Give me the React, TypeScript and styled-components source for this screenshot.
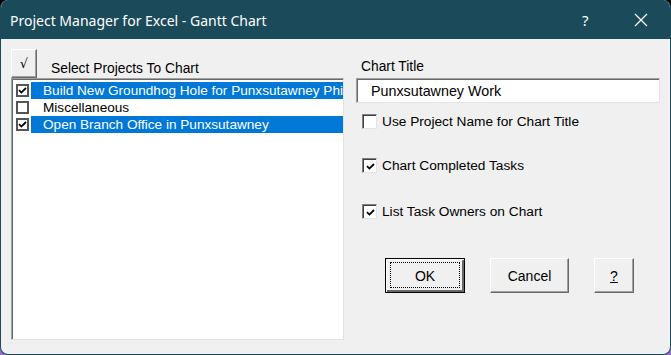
import React from "react";
import styled, { createGlobalStyle } from "styled-components";

const GlobalStyle = createGlobalStyle`
  html, body {
    margin: 0;
    padding: 0;
    width: 671px;
    height: 355px;
    overflow: hidden;
    background: linear-gradient(#000 0%, #000 50%, #9a6ad0 50%);
  }
`;

const projects = [
  { name: "Build New Groundhog Hole for Punxsutawney Phil", checked: true },
  { name: "Miscellaneous", checked: false },
  { name: "Open Branch Office in Punxsutawney", checked: true },
];

const options = [
  { label: "Use Project Name for Chart Title", checked: false, top: 11 },
  { label: "Chart Completed Tasks", checked: true, top: 29 },
  { label: "List Task Owners on Chart", checked: true, top: 31 },
];

const CheckMark = () => (
  <svg width="9" height="9" viewBox="0 0 9 9">
    <path d="M1 4.2 L3.4 6.6 L8 2" stroke="#000" strokeWidth="1.8" fill="none" />
  </svg>
);

const App = () => {
  return (
    <>
      <GlobalStyle />
      <Window>
        <TitleBar>
          <Title>Project Manager for Excel - Gantt Chart</Title>
          <HelpGlyph>?</HelpGlyph>
          <CloseIcon>
            <svg width="14" height="14" viewBox="0 0 14 14">
              <path d="M1 1 L13 13 M13 1 L1 13" stroke="#fff" strokeWidth="1.2" />
            </svg>
          </CloseIcon>
        </TitleBar>
        <Body>
          <LeftPane>
            <HeaderRow>
              <SelectAllButton>√</SelectAllButton>
              <Label>Select Projects To Chart</Label>
            </HeaderRow>
            <ListBox>
              {projects.map((p) => (
                <ListRow key={p.name}>
                  <ListCheck>{p.checked && <CheckMark />}</ListCheck>
                  <ListText $selected={p.checked}>{p.name}</ListText>
                </ListRow>
              ))}
            </ListBox>
          </LeftPane>
          <RightPane>
            <Label $indent={5}>Chart Title</Label>
            <TextBox>Punxsutawney Work</TextBox>
            {options.map((o) => (
              <OptionRow key={o.label} $top={o.top}>
                <OptionCheck>{o.checked && <CheckMark />}</OptionCheck>
                <OptionLabel>{o.label}</OptionLabel>
              </OptionRow>
            ))}
            <ButtonRow>
              <DialogButton $default $width={80}>
                OK
              </DialogButton>
              <DialogButton $width={79}>Cancel</DialogButton>
              <DialogButton $width={40}>
                <u>?</u>
              </DialogButton>
            </ButtonRow>
          </RightPane>
        </Body>
      </Window>
    </>
  );
};

export default App;

const Window = styled.div`
  box-sizing: border-box;
  width: 671px;
  height: 355px;
  display: flex;
  flex-direction: column;
  background: #f0f0f0;
  border: 1px solid #1b4a5a;
  border-top: none;
  border-radius: 8px;
  overflow: hidden;
  font-family: "Liberation Sans", Arial, sans-serif;
  color: #000;
`;

const TitleBar = styled.div`
  height: 39px;
  flex: none;
  display: flex;
  align-items: center;
  background: #1b4a5a;
  color: #fff;
  padding-left: 9px;
`;

const Title = styled.div`
  font-family: "Noto Sans", "Open Sans", sans-serif;
  font-size: 14px;
  flex: 1;
  padding-top: 1px;
`;

const HelpGlyph = styled.div`
  font-family: "Noto Sans", sans-serif;
  font-size: 15px;
  width: 14px;
  margin-right: 38px;
`;

const CloseIcon = styled.div`
  width: 14px;
  height: 14px;
  display: flex;
  margin-right: 22px;
`;

const Body = styled.div`
  flex: 1;
  display: flex;
  gap: 12px;
  padding: 10px 10px 14px 10px;
`;

const LeftPane = styled.div`
  width: 333px;
  display: flex;
  flex-direction: column;
`;

const HeaderRow = styled.div`
  display: flex;
  align-items: flex-end;
  gap: 14px;
  height: 29px;
`;

const SelectAllButton = styled.div`
  box-sizing: border-box;
  width: 26px;
  height: 29px;
  display: flex;
  align-items: center;
  justify-content: center;
  background: #f0f0f0;
  border: 1px solid;
  border-color: #fff #696969 #696969 #fff;
  box-shadow: inset -1px -1px #a0a0a0;
  font-family: "DejaVu Sans", sans-serif;
  font-size: 13px;
`;

const Label = styled.div<{ $indent?: number }>`
  font-size: 13.8px;
  line-height: 16px;
  padding-bottom: 1px;
  padding-left: ${(p) => p.$indent ?? 0}px;
`;

const ListBox = styled.div`
  flex: 1;
  box-sizing: border-box;
  background: #fff;
  border: 1px solid;
  border-color: #a0a0a0 #e3e3e3 #e3e3e3 #a0a0a0;
  box-shadow: inset 1px 1px #696969;
  padding: 3px 0 0 2px;
  overflow: hidden;
`;

const ListRow = styled.div`
  display: flex;
  align-items: center;
  height: 17px;
`;

const ListCheck = styled.div`
  box-sizing: border-box;
  width: 13px;
  height: 13px;
  margin: 0 2px 0 2px;
  border: 2px solid #555;
  background: #fff;
  display: flex;
  align-items: center;
  justify-content: center;
  flex: none;
`;

const ListText = styled.div<{ $selected: boolean }>`
  flex: 1;
  height: 17px;
  line-height: 17px;
  padding-left: 12px;
  white-space: nowrap;
  overflow: hidden;
  font-size: 13.6px;
  background: ${(p) => (p.$selected ? "#0078d7" : "transparent")};
  color: ${(p) => (p.$selected ? "#fff" : "#000")};
`;

const RightPane = styled.div`
  flex: 1;
  display: flex;
  flex-direction: column;
  padding-top: 10px;
`;

const TextBox = styled.div`
  box-sizing: border-box;
  height: 25px;
  margin-top: 2px;
  padding-left: 14px;
  display: flex;
  align-items: center;
  background: #fff;
  border: 1px solid;
  border-color: #a0a0a0 #e3e3e3 #e3e3e3 #a0a0a0;
  box-shadow: inset 1px 1px #696969;
  font-size: 14.3px;
`;

const OptionRow = styled.div<{ $top: number }>`
  display: flex;
  align-items: center;
  gap: 5px;
  height: 15px;
  margin-top: ${(p) => p.$top}px;
  padding-left: 6px;
`;

const OptionCheck = styled.div`
  box-sizing: border-box;
  width: 15px;
  height: 15px;
  flex: none;
  background: #fff;
  border: 1px solid;
  border-color: #808080 #e3e3e3 #e3e3e3 #808080;
  box-shadow: inset 1px 1px #404040;
  display: flex;
  align-items: center;
  justify-content: center;
  padding: 1px 0 0 1px;
`;

const OptionLabel = styled.div`
  font-size: 13.7px;
  line-height: 15px;
`;

const ButtonRow = styled.div`
  display: flex;
  gap: 25px;
  margin-top: 39px;
  padding-left: 29px;
`;

const DialogButton = styled.div<{ $default?: boolean; $width: number }>`
  position: relative;
  box-sizing: border-box;
  width: ${(p) => p.$width}px;
  height: 35px;
  display: flex;
  align-items: center;
  justify-content: center;
  font-size: 14px;
  background: #f0f0f0;
  border: 1px solid;
  border-color: ${(p) =>
    p.$default ? "#000" : "#fff #696969 #696969 #fff"};
  box-shadow: ${(p) =>
    p.$default
      ? "inset 1px 1px #fff, inset -2px -2px #696969"
      : "inset -1px -1px #a0a0a0, inset 1px 1px #f0f0f0"};

  &::after {
    content: "";
    display: ${(p) => (p.$default ? "block" : "none")};
    position: absolute;
    inset: 3px 4px 4px 4px;
    border: 1px dotted #000;
  }
`;
